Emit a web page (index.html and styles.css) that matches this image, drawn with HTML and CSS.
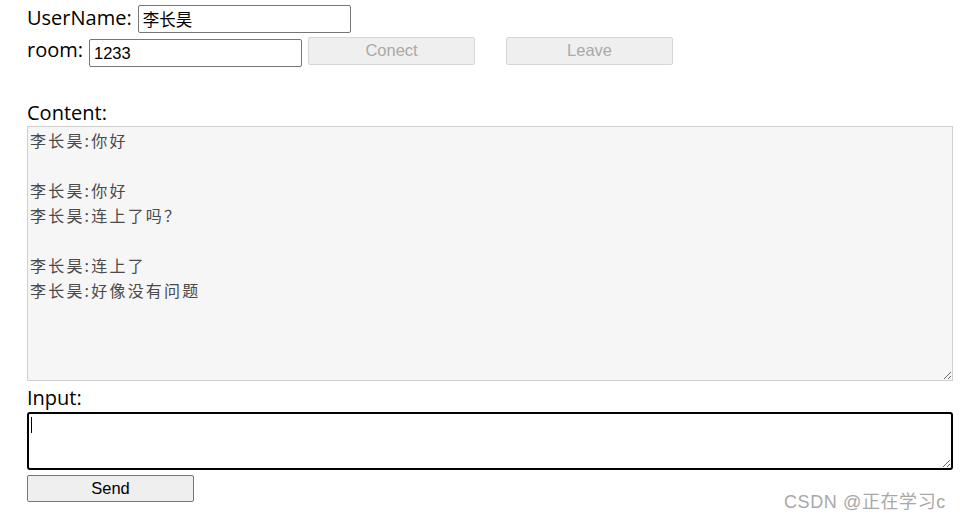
FILE: index.html
```html
<!DOCTYPE html>
<html lang="zh">
<head>
<meta charset="utf-8">
<title>Chat</title>
<link rel="stylesheet" href="styles.css">
</head>
<body>
<div class="page">
  <div class="row row-user">
    <label class="lbl">UserName:</label>
    <input class="field field-user" type="text" value="李长昊">
  </div>
  <div class="row row-room">
    <label class="lbl">room:</label>
    <input class="field field-room" type="text" value="1233">
    <button class="btn btn-disabled" disabled>Conect</button>
    <button class="btn btn-disabled btn-leave" disabled>Leave</button>
  </div>
  <label class="lbl lbl-block lbl-content">Content:</label>
  <textarea class="content" readonly>李长昊:你好

李长昊:你好
李长昊:连上了吗？

李长昊:连上了
李长昊:好像没有问题</textarea>
  <label class="lbl lbl-block lbl-input">Input:</label>
  <div class="input-wrap">
    <textarea class="msg"></textarea>
    <span class="caret"></span>
  </div>
  <button class="btn btn-send">Send</button>
</div>
<div class="watermark">CSDN @正在学习c</div>
</body>
</html>
```
FILE: styles.css
```css
html, body {
  margin: 0;
  padding: 0;
  background: #fff;
}
body {
  font-family: "Open Sans", "Noto Sans CJK SC", sans-serif;
  width: 960px;
  height: 518px;
  overflow: hidden;
  position: relative;
}
.page {
  padding: 5px 0 0 27px;
  display: flex;
  flex-direction: column;
  align-items: flex-start;
}
.row {
  display: flex;
  align-items: flex-start;
}
.lbl {
  font-family: "Open Sans", "Noto Sans CJK SC", sans-serif;
  font-size: 20px;
  color: #000;
  line-height: 26px;
}
.row-user .lbl { margin-right: 6px; }
.row-room { margin-top: 4px; }
.row-room .lbl { margin-right: 6px; }
.field {
  box-sizing: border-box;
  height: 28px;
  border: 1px solid #767676;
  border-radius: 2px;
  padding: 0 4px;
  font-family: "Liberation Sans", "Noto Sans CJK SC", sans-serif;
  font-size: 16.5px;
  color: #000;
  background: #fff;
  outline: none;
}
.field-user { width: 213px; }
.field-room { width: 213px; margin-top: 2px; }
.btn {
  box-sizing: border-box;
  width: 167px;
  height: 28px;
  border-radius: 2px;
  font-family: "Liberation Sans", sans-serif;
  font-size: 16.5px;
  padding: 0 0 1px;
}
.btn-disabled {
  margin-left: 6px;
  background: #efefef;
  border: 1px solid #d6d6d6;
  color: #a9a9a9;
}
.btn-leave { margin-left: 31px; }
.lbl-content { margin-top: 33px; }
.content {
  box-sizing: border-box;
  width: 926px;
  height: 255px;
  margin: 0;
  border: 1px solid #d0d0d0;
  border-radius: 0;
  background: #f6f6f6;
  padding: 1px 2px;
  font-family: "Noto Sans CJK SC", monospace;
  font-size: 16px;
  letter-spacing: 2.2px;
  line-height: 25px;
  color: #4a4a4a;
  resize: both;
  outline: none;
}
.lbl-input { margin-top: 4px; }
.input-wrap {
  position: relative;
  margin-top: 1px;
}
.msg {
  display: block;
  box-sizing: border-box;
  width: 926px;
  height: 58px;
  margin: 0;
  border: 2px solid #000;
  border-radius: 3px;
  background: #fff;
  outline: none;
  resize: both;
}
.caret {
  position: absolute;
  left: 4px;
  top: 5px;
  width: 1px;
  height: 16px;
  background: #000;
}
.btn-send {
  margin-top: 5px;
  height: 27px;
  background: #efefef;
  border: 1px solid #767676;
  color: #000;
}
.watermark {
  position: absolute;
  left: 784px;
  top: 487px;
  font-family: "Liberation Sans", "Noto Sans CJK SC", sans-serif;
  font-size: 18px;
  letter-spacing: 0.6px;
  color: #a8a8a8;
  white-space: nowrap;
}
```
